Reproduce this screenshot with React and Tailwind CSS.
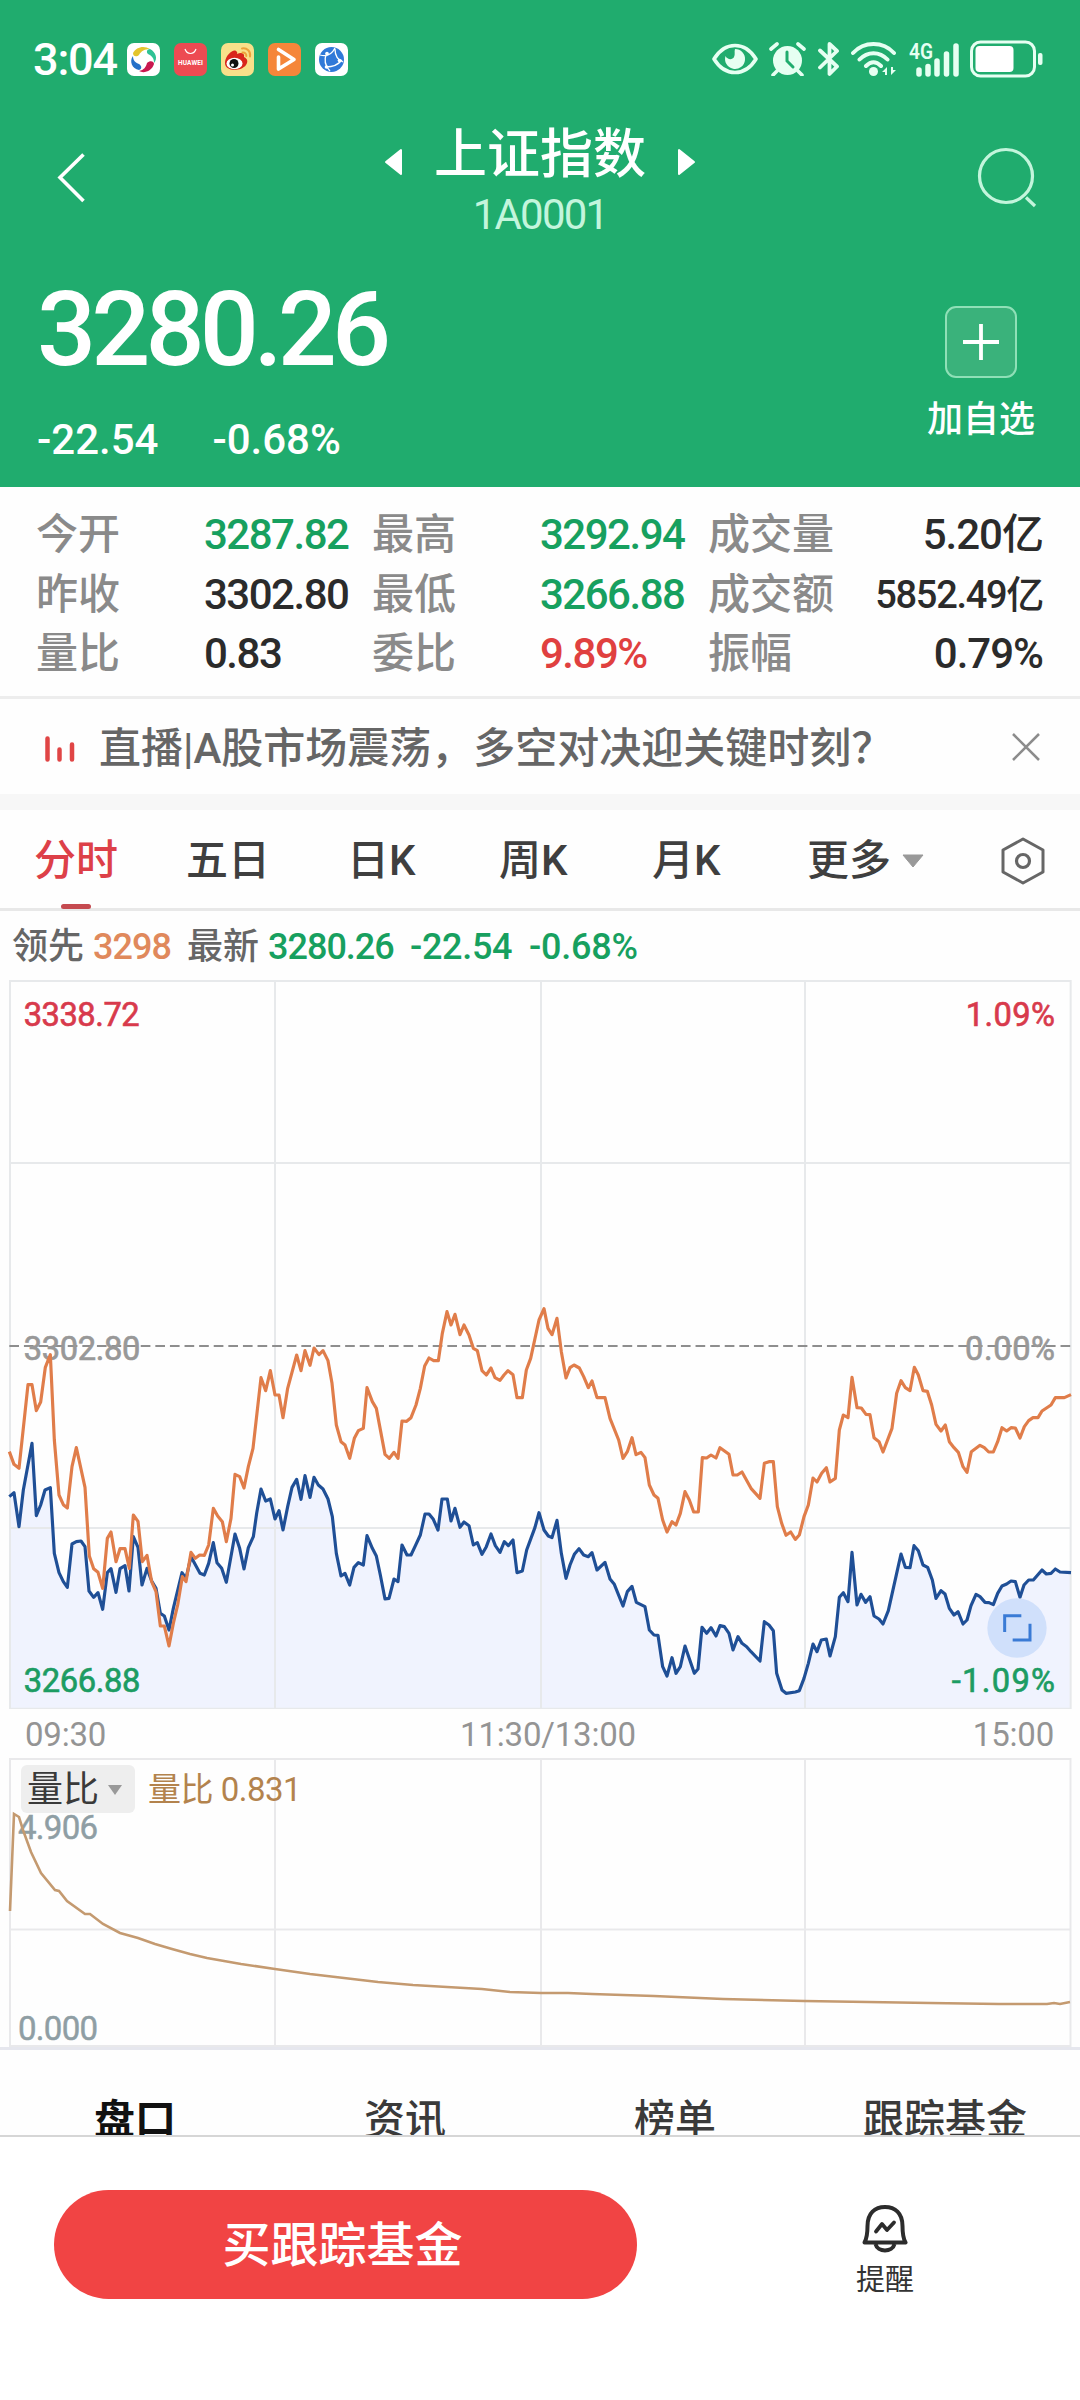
const stats = [
  ['今开', '3287.82', 'text-[#17a05f]', '最高', '3292.94', 'text-[#17a05f]', '成交量', '5.20亿'],
  ['昨收', '3302.80', 'text-[#2b2b2b]', '最低', '3266.88', 'text-[#17a05f]', '成交额', '5852.49亿'],
  ['量比', '0.83', 'text-[#2b2b2b]', '委比', '9.89%', 'text-[#e0403f]', '振幅', '0.79%'],
];

const leadLine =
  '28,515 42,553 57,565 84,314 96,314 109,392 122,366 136,262 151,224 163,480 177,645 190,674 202,684 216,560 229,503 255,622 268,828 281,866 294,877 308,925 322,775 333,756 348,845 360,806 375,806 388,865 400,705 414,724 427,845 441,826 455,905 468,935 481,1038 493,1038 507,1098 520,1030 533,975 547,890 558,905 573,817 586,835 599,825 613,826 626,795 640,685 653,708 667,725 679,785 693,715 705,583 719,590 732,624 745,560 759,505 783,293 797,332 811,272 825,345 837,345 849,413 863,325 890,225 903,272 915,212 930,256 942,204 957,224 969,212 984,242 996,310 1009,435 1023,485 1035,495 1049,535 1063,475 1075,452 1090,445 1101,323 1117,365 1129,385 1155,523 1168,535 1182,517 1194,535 1206,423 1220,424 1233,413 1248,375 1261,325 1274,258 1287,234 1301,242 1315,242 1327,160 1341,95 1353,135 1365,103 1380,164 1392,135 1407,165 1420,205 1432,212 1446,272 1459,285 1473,264 1485,293 1500,301 1512,285 1524,272 1539,284 1551,353 1567,353 1579,270 1592,235 1617,120 1632,86 1644,145 1656,164 1671,115 1684,215 1698,294 1710,263 1722,255 1738,264 1751,290 1765,323 1776,303 1791,353 1815,353 1830,415 1856,480 1869,535 1882,515 1896,473 1908,524 1923,517 1935,533 1948,615 1962,645 1974,655 1988,720 2001,756 2016,725 2028,735 2041,700 2055,635 2068,660 2081,696 2095,696 2107,533 2120,534 2133,525 2148,534 2160,503 2187,523 2199,585 2212,585 2226,576 2253,625 2280,655 2293,550 2307,545 2320,545 2332,680 2345,730 2358,766 2372,756 2386,778 2398,765 2412,710 2425,675 2439,594 2451,606 2465,580 2479,563 2490,606 2506,595 2518,450 2530,405 2544,413 2556,292 2571,383 2584,384 2598,403 2610,404 2622,473 2637,485 2649,516 2676,445 2690,340 2703,302 2716,323 2730,332 2743,262 2755,285 2769,332 2782,334 2795,375 2808,433 2823,453 2836,435 2848,485 2862,503 2875,517 2889,560 2901,577 2914,515 2940,496 2953,503 2966,516 2980,516 2993,485 3006,443 3020,453 3033,443 3046,444 3060,474 3073,440 3086,422 3099,413 3114,413 3126,393 3153,375 3166,353 3193,353 3213,344';

const priceLine =
  '28,650 42,638 57,740 70,630 96,490 109,707 122,675 135,630 151,623 163,820 177,878 190,905 202,922 216,792 229,785 243,783 255,800 267,933 281,952 294,938 308,988 322,878 333,866 348,937 360,866 375,857 387,933 400,770 414,802 426,915 441,865 455,903 468,925 481,1000 493,1008 507,1050 520,985 546,878 558,895 573,830 600,880 613,885 626,850 640,788 651,848 665,865 679,907 705,762 719,805 732,867 745,803 760,770 770,700 783,627 797,663 811,657 825,717 837,692 849,750 863,680 876,622 890,598 903,658 915,587 930,652 942,592 955,615 969,627 984,657 997,710 1009,820 1023,888 1035,880 1049,915 1062,862 1075,848 1090,855 1101,767 1117,805 1129,828 1141,885 1155,957 1167,955 1182,897 1194,905 1206,795 1221,825 1233,825 1248,793 1261,765 1275,702 1287,702 1300,718 1314,750 1326,657 1342,657 1353,723 1365,685 1380,742 1392,726 1407,737 1420,795 1432,788 1446,823 1459,800 1473,762 1486,797 1500,817 1513,785 1525,797 1539,780 1551,878 1567,873 1580,810 1605,742 1617,698 1632,750 1645,768 1656,773 1671,721 1684,820 1698,895 1710,855 1723,823 1737,806 1751,825 1765,830 1776,818 1791,870 1815,847 1830,897 1843,913 1869,978 1882,935 1896,919 1909,967 1935,980 1948,1050 1962,1065 1974,1066 1988,1160 2001,1188 2016,1133 2028,1180 2041,1160 2055,1098 2083,1180 2094,1167 2106,1042 2120,1060 2133,1043 2148,1068 2160,1037 2173,1040 2187,1060 2199,1110 2214,1070 2226,1090 2240,1100 2253,1115 2280,1143 2293,1025 2307,1035 2320,1052 2330,1180 2346,1230 2358,1240 2386,1236 2398,1232 2412,1195 2425,1150 2439,1092 2451,1115 2464,1080 2479,1077 2490,1128 2506,1070 2518,952 2530,938 2544,965 2556,817 2571,975 2583,943 2597,967 2610,950 2622,1008 2637,1017 2649,1032 2665,992 2690,880 2703,822 2716,862 2730,863 2742,797 2755,812 2769,855 2783,862 2797,900 2808,955 2823,932 2835,942 2848,985 2862,1005 2874,995 2889,1032 2901,1020 2913,977 2928,943 2940,950 2955,967 2967,968 2980,974 2993,940 3006,918 3020,912 3033,903 3046,905 3060,952 3072,915 3086,900 3100,900 3126,870 3139,882 3153,880 3166,867 3180,876 3213,878';

const ratioLine =
  '10,153 14,56 19,59 23,72 31,94 41,115 55,132 59,133 67,143 85,156 90,156 103,166 120,175 138,180 155,186 172,191 190,196 207,200 224,203 241,206 275,211 310,216 344,220 378,224 413,227 447,229 482,231 510,234 541,235 568,235 592,236 654,238 723,241 804,243 868,244 930,245 999,246 1047,246 1054,245 1060,246 1070,244';

function StatusBar() {
  return (
    <div className="flex h-[118px] items-center pl-[33px] pr-[37px]">
      <span className="w-[94px] text-[45px] leading-none tracking-[-1.200px]">3:04</span>
      <div className="flex gap-[14px]">
        <svg className="size-[33px]" viewBox="0 0 33 33">
          <rect width="33" height="33" rx="7" fill="#fff" />
          <path d="M6 10C9 4 17 2 23 6 18 6 14 8 12 12 10 14 6 14 6 10Z" fill="#e3c52d" />
          <path d="M23 6C29 9 31 16 27 20 27 15 25 13 21 11 19 9 20 6 23 6Z" fill="#2fc295" />
          <path d="M27 21C25 28 17 31 12 28 17 27 19 24 20 20 23 17 27 18 27 21Z" fill="#c9184f" />
          <path d="M12 27C5 26 2 18 6 13 6 18 9 20 12 21 15 23 15 26 12 27Z" fill="#2470c8" />
        </svg>
        <svg className="size-[33px]" viewBox="0 0 33 33">
          <rect width="33" height="33" rx="7" fill="#ed4b52" />
          <path d="M11 6c1 3 3 4.500 5.500 4.500S21 9 22 6" fill="none" stroke="#fff" strokeWidth="1.200" />
          <text x="16.500" y="21.500" textAnchor="middle" textLength="25" fontSize="6.500" fontWeight="700" fill="#fff">HUAWEI</text>
        </svg>
        <svg className="size-[33px]" viewBox="0 0 33 33">
          <rect width="33" height="33" rx="7" fill="#f8e08a" />
          <path d="M4 19C5 12 12 6 15 8c2 1 1 3 1 3 4-2 8-1 7 3 4 2 4 5 2 8-5 7-22 7-21-3Z" fill="#d9261c" />
          <ellipse cx="13.500" cy="20.500" rx="8" ry="5.800" fill="#fff" />
          <circle cx="13" cy="20.500" r="4.500" fill="#111" />
          <circle cx="11.500" cy="22" r="1.500" fill="#fff" />
          <path d="M21 5.500c5-1 9 3 8 8M21.500 9.500c2.500-.3 4 1.500 3.800 3.500" fill="none" stroke="#eda13a" strokeWidth="2" strokeLinecap="round" />
        </svg>
        <svg className="size-[33px]" viewBox="0 0 33 33">
          <rect width="33" height="33" rx="7" fill="#f5863a" />
          <path d="M10.500 6.500 26 16.500 10.500 26V14" fill="none" stroke="#fff" strokeWidth="3.600" strokeLinecap="round" strokeLinejoin="round" />
        </svg>
        <svg className="size-[33px]" viewBox="0 0 33 33">
          <rect width="33" height="33" rx="7" fill="#fff" />
          <circle cx="16.500" cy="16.500" r="12.500" fill="#3079d8" />
          <path d="M5 12C12 14 17 11 20 5M12 9.500C9 16 10 23 15 28M20 6c0 7 3 11 8 13M11 24c6 0 12-2 16-7" fill="none" stroke="#fff" strokeWidth="1.300" />
          <circle cx="12" cy="10.500" r="1.800" fill="#fff" />
          <circle cx="24.500" cy="17.500" r="1.800" fill="#fff" />
          <circle cx="11.500" cy="24" r="1.800" fill="#fff" />
        </svg>
      </div>
      <div className="ml-auto flex items-center gap-[11.500px]">
        <svg className="h-[34px] w-[46px]" viewBox="0 0 46 34">
          <path d="M2 17C13-1 33-1 44 17 33 35 13 35 2 17Z" fill="none" stroke="#e6fff2" strokeWidth="3.600" strokeLinejoin="round" />
          <path d="M23 7a10 10 0 1 1-9.500 7c2 4 7 4 8.500 1 1.500-3 0-5 1-8Z" fill="#e6fff2" />
        </svg>
        <svg className="h-[34px] w-[37px]" viewBox="0 0 37 34">
          <circle cx="18.500" cy="18.500" r="14.500" fill="#e6fff2" />
          <path d="M2 7 8 2M35 7 29 2M8 29l-4 4M29 29l4 4" stroke="#e6fff2" strokeWidth="3.600" strokeLinecap="round" />
          <path d="M18 10v9l6 6" fill="none" stroke="#20ac6e" strokeWidth="3" strokeLinecap="round" />
        </svg>
        <svg className="h-[36px] w-[22px]" viewBox="0 0 22 36">
          <path d="M2 9.500 19 25.500 11.500 33V3L19 10 2 26.500" fill="none" stroke="#e6fff2" strokeWidth="3.800" strokeLinejoin="round" strokeLinecap="round" />
        </svg>
        <svg className="h-[36px] w-[46px]" viewBox="0 0 46 36">
          <path d="M2 12C13 0 32 0 43 12M8.500 18.500c8-8.500 20-8.500 28 0M15 25c5-5 10-5 15 0" fill="none" stroke="#e6fff2" strokeWidth="4" strokeLinecap="round" />
          <circle cx="22.500" cy="30.500" r="4.500" fill="#e6fff2" />
          <path d="m31 31 5-5v8h-2v-3ZM45 29l-5 5v-8h2v3Z" fill="#e6fff2" />
        </svg>
        <svg className="h-[37px] w-[50px]" viewBox="0 0 50 37">
          <path d="M10 29v4M19 25.500v7.500M28 20v13M37.500 13v20M47 5v28" stroke="#e6fff2" strokeWidth="5.500" strokeLinecap="round" />
          <text x="0" y="18" textLength="24" lengthAdjust="spacingAndGlyphs" fontSize="22" fontWeight="600" fill="#e6fff2">4G</text>
        </svg>
        <svg className="h-[38px] w-[73px]" viewBox="0 0 73 38">
          <rect x="1.500" y="2" width="63" height="34" rx="9" fill="none" stroke="#e6fff2" strokeWidth="3" />
          <rect x="5.500" y="6" width="38" height="26" rx="4" fill="#fff" />
          <rect x="68" y="13" width="4.500" height="12" rx="2" fill="#e6fff2" />
        </svg>
      </div>
    </div>
  );
}

function Header() {
  return (
    <header className="h-[487px] bg-[#20ac6e] text-white">
      <StatusBar />
      <div className="flex h-[120px] items-center justify-between pl-[56px] pr-[42px]">
        <svg className="h-[50px] w-[48px]" viewBox="0 0 48 50">
          <path d="M27.500 1.500 4 24.500 27.500 48" fill="none" stroke="#fff" strokeWidth="3.600" />
        </svg>
        <div className="flex flex-col items-center pt-[4px]">
          <div className="flex h-[72px] items-center gap-[31px]">
            <svg className="mt-[14px] h-[28px] w-[19px]" viewBox="0 0 19 28">
              <path d="M17 2v24L2 14Z" fill="#fff" stroke="#fff" strokeWidth="2" strokeLinejoin="round" />
            </svg>
            <h1 className="text-[53px] leading-[72px]">上证指数</h1>
            <svg className="mt-[14px] h-[28px] w-[19px]" viewBox="0 0 19 28">
              <path d="M2 2v24L17 14Z" fill="#fff" stroke="#fff" strokeWidth="2" strokeLinejoin="round" />
            </svg>
          </div>
          <p className="h-[50px] text-[42px] font-normal leading-[48px] tracking-[-1.800px] text-[#c3f5dc]">1A0001</p>
        </div>
        <svg className="h-[62px] w-[62px]" viewBox="0 0 62 62">
          <circle cx="30" cy="29" r="26.500" fill="none" stroke="#c3f5dc" strokeWidth="3.200" />
          <path d="M50 50.500 59 59" stroke="#c3f5dc" strokeWidth="3.200" />
        </svg>
      </div>
      <div className="flex justify-between pl-[37px] pr-[45px]">
        <div className="pt-[34px]">
          <p className="h-[116px] text-[104px] leading-[116px] tracking-[-4.900px]">3280.26</p>
          <p className="flex gap-[54px] pt-[26px] text-[42px] leading-[52px]">
            <span>-22.54</span>
            <span>-0.68%</span>
          </p>
        </div>
        <div className="flex flex-col items-center pt-[68px]">
          <div className="flex size-[72px] items-center justify-center rounded-[11px] border-2 border-[#8fe0b7] bg-[#3ab27b]">
            <svg className="size-[36px]" viewBox="0 0 36 36">
              <path d="M0 18h36M18 0v36" stroke="#fff" strokeWidth="3.800" />
            </svg>
          </div>
          <span className="pt-[18px] text-[36px] leading-[48px]">加自选</span>
        </div>
      </div>
    </header>
  );
}

function Stats() {
  return (
    <section className="h-[212px] border-b-[3px] border-[#ededed] pl-[36px] pr-[37px] pt-[18px] text-[42px] leading-[60px] text-[#8a8a8a]">
      {stats.map((r) => (
        <div key={r[0]} className="flex h-[59.700px] items-center">
          <span className="w-[168px]">{r[0]}</span>
          <span className={`w-[168px] tracking-[-1.500px] ${r[2]}`}>{r[1]}</span>
          <span className="w-[168px]">{r[3]}</span>
          <span className={`w-[168px] tracking-[-1.500px] ${r[5]}`}>{r[4]}</span>
          <span>{r[6]}</span>
          <span className={r[7].length > 7 ? 'ml-auto text-[38px] tracking-[-1.300px] text-[#2b2b2b]' : 'ml-auto tracking-[-1px] text-[#2b2b2b]'}>{r[7]}</span>
        </div>
      ))}
    </section>
  );
}

function News() {
  return (
    <section className="flex h-[95px] items-center pl-[44px] pr-[40px]">
      <svg className="mt-[5px] h-[26px] w-[55px]" viewBox="0 0 55 26">
        <path d="M3.500 2.500v21M15.500 13.500v10M28 8.500v15" stroke="#e04545" strokeWidth="4.500" strokeLinecap="round" />
      </svg>
      <p className="pt-[4px] text-[42px] leading-[60px] text-[#666]">直播|A股市场震荡，多空对决迎关键时刻？</p>
      <svg className="ml-auto size-[28px]" viewBox="0 0 28 28">
        <path d="m1 1 26 26M27 1 1 27" stroke="#8c8c8c" strokeWidth="2.500" />
      </svg>
    </section>
  );
}

function PeriodTabs() {
  return (
    <nav className="flex h-[101px] items-center border-b-[3px] border-[#e8e8e8] pl-[34px] pr-[35px] pt-[4px] text-[42px] leading-[60px] text-[#3f3f3f]">
      <div className="relative w-[152px] text-[#dd4048]">
        分时
        <span className="absolute -bottom-[18px] left-[27px] h-[5px] w-[30px] rounded-full bg-[#c54a50]" />
      </div>
      <div className="w-[161px]">五日</div>
      <div className="w-[152px]">日K</div>
      <div className="w-[153px]">周K</div>
      <div className="w-[155px]">月K</div>
      <div className="flex items-center gap-[11px]">
        更多
        <svg className="h-[14px] w-[22px]" viewBox="0 0 22 14">
          <path d="M1 1h20L11 13Z" fill="#999" stroke="#999" strokeLinejoin="round" />
        </svg>
      </div>
      <svg className="ml-auto h-[48px] w-[44px]" viewBox="0 0 44 48">
        <path d="M22 2 42 13v22L22 46 2 35V13Z" fill="none" stroke="#666" strokeWidth="3" strokeLinejoin="round" />
        <circle cx="22" cy="24" r="6.500" fill="none" stroke="#666" strokeWidth="3.200" />
      </svg>
    </nav>
  );
}

function PriceChart() {
  return (
    <svg className="block h-[729px] w-[1080px] font-normal" viewBox="0 -900 3240 2187">
      <polygon points={`28,1287 ${priceLine} 3213,1287`} fill="#f0f3fe" />
      <path d="M30-897H3212V1286H30ZM825-897V1286M1623-897V1286M2415-897V1286M30-351H3212M30 744H3212" fill="none" stroke="#e7e9eb" strokeWidth="6" />
      <path d="M28 198H3212" stroke="#8e8e8e" strokeWidth="6" strokeDasharray="29 14.800" />
      <g fontSize="98" strokeWidth="2">
        <text x="71" y="-763" textLength="348" fill="#d83a4c" stroke="#d83a4c">3338.72</text>
        <text x="3165" y="-763" textLength="268" textAnchor="end" fill="#d83a4c" stroke="#d83a4c">1.09%</text>
        <text x="71" y="240" textLength="350" fill="#989898" stroke="#989898">3302.80</text>
        <text x="3165" y="240" textLength="270" textAnchor="end" fill="#989898" stroke="#989898">0.00%</text>
        <text x="71" y="1236" textLength="350" fill="#1c9c63" stroke="#1c9c63">3266.88</text>
        <text x="3165" y="1236" textLength="310" textAnchor="end" fill="#1c9c63" stroke="#1c9c63">-1.09%</text>
      </g>
      <g fill="none" strokeWidth="9.500" strokeLinejoin="round">
        <polyline points={priceLine} stroke="#1f4f96" />
        <polyline points={leadLine} stroke="#e07d4a" />
      </g>
      <circle cx="3051" cy="1044" r="89" fill="#d0e0fb" />
      <path d="M3014 1056V1007H3064M3038 1080H3090V1031" fill="none" stroke="#3a7bd5" strokeWidth="9" />
    </svg>
  );
}

function RatioChart() {
  return (
    <div className="relative h-[292px] border-b-[3px] border-[#e6e7ee] font-normal">
      <svg className="block h-[289px] w-[1080px]" viewBox="0 0 1080 289">
        <path d="M10 1H1070.500V288H10ZM275 1V288M541 1V288M805 1V288M10 171.500H1070" fill="none" stroke="#e9e9eb" strokeWidth="2" />
        <g fontSize="33" fill="#8f9ea4" stroke="#8f9ea4" strokeWidth="0.500">
          <text x="18" y="81" textLength="80">4.906</text>
          <text x="18" y="282" textLength="80">0.000</text>
        </g>
        <polyline points={ratioLine} fill="none" stroke="#c49a70" strokeWidth="2.600" />
      </svg>
      <div className="absolute left-[21px] top-[6px] flex items-center">
        <div className="flex h-[48px] items-center gap-[8px] rounded-[6px] bg-[#eee] pl-[6px] pr-[12px] text-[36px] leading-[48px] text-[#3a3a3a]">
          <span className="pt-[2px]">量比</span>
          <svg className="mt-[2px] h-[12px] w-[16px]" viewBox="0 0 16 12">
            <path d="M1 1h14L8 11Z" fill="#999" />
          </svg>
        </div>
        <span className="pl-[13px] pt-[2px] text-[33px] leading-[48px] tracking-[-0.500px] text-[#b3834d]">量比 0.831</span>
      </div>
    </div>
  );
}

function BottomBar() {
  return (
    <footer className="flex h-[265px] border-t-2 border-[#d6d6d6] bg-white pl-[54px]">
      <button className="mt-[53px] h-[109px] w-[583px] rounded-full bg-[#f14444] pr-[6px] pt-[2px] text-[48px] font-medium text-white">买跟踪基金</button>
      <div className="ml-[190px] flex w-[116px] flex-col items-center pt-[67px]">
        <svg className="h-[49px] w-[46px]" viewBox="0 0 46 49">
          <path d="M2.500 38.500C5 34 5.500 30 5.500 22 5.500 9 13 3 23 3s17.500 6 17.500 19c0 8 .5 12 3 16.500Z" fill="none" stroke="#2c2c2c" strokeWidth="4" strokeLinejoin="round" />
          <path d="M13.500 40c2 8.500 17 8.500 19 0" fill="none" stroke="#2c2c2c" strokeWidth="4" />
          <path d="m14 27.500 6-7.500 5 6 7-7.500" fill="none" stroke="#2c2c2c" strokeWidth="3.800" strokeLinecap="round" strokeLinejoin="round" />
        </svg>
        <span className="pt-[7px] text-[29px] font-normal leading-[40px] text-[#333]">提醒</span>
      </div>
    </footer>
  );
}

export default function App() {
  return (
    <div className="flex h-[2400px] w-[1080px] flex-col overflow-hidden bg-[#fefefe] font-[Roboto,'Noto_Sans_CJK_SC',sans-serif] font-medium">
      <Header />
      <Stats />
      <News />
      <div className="h-[16px] bg-[#f7f7f7]" />
      <PeriodTabs />
      <div className="flex h-[69px] items-center pl-[12px] pt-[2px] text-[36px] leading-[50px] tracking-[-1px] text-[#17a05f]">
        <span className="w-[81px] tracking-normal text-[#666]">领先</span>
        <span className="w-[94px] text-[#e0895c]">3298</span>
        <span className="w-[81px] tracking-normal text-[#666]">最新</span>
        <span className="w-[142px]">3280.26</span>
        <span className="w-[119px] tracking-[-0.300px]">-22.54</span>
        <span className="tracking-[-0.200px]">-0.68%</span>
      </div>
      <PriceChart />
      <div className="flex h-[49px] items-center justify-between pl-[25px] pr-[26px] pt-[3px] text-[33px] font-normal leading-[46px] tracking-[-0.200px] text-[#949494]">
        <span>09:30</span>
        <span className="pl-[17px]">11:30/13:00</span>
        <span>15:00</span>
      </div>
      <RatioChart />
      <div className="grid h-[85px] grid-cols-4 overflow-hidden pt-[39px] text-center text-[41px] leading-[62px] text-[#3a3a3a]">
        <span className="font-bold text-[#111]">盘口</span>
        <span>资讯</span>
        <span>榜单</span>
        <span>跟踪基金</span>
      </div>
      <BottomBar />
    </div>
  );
}
